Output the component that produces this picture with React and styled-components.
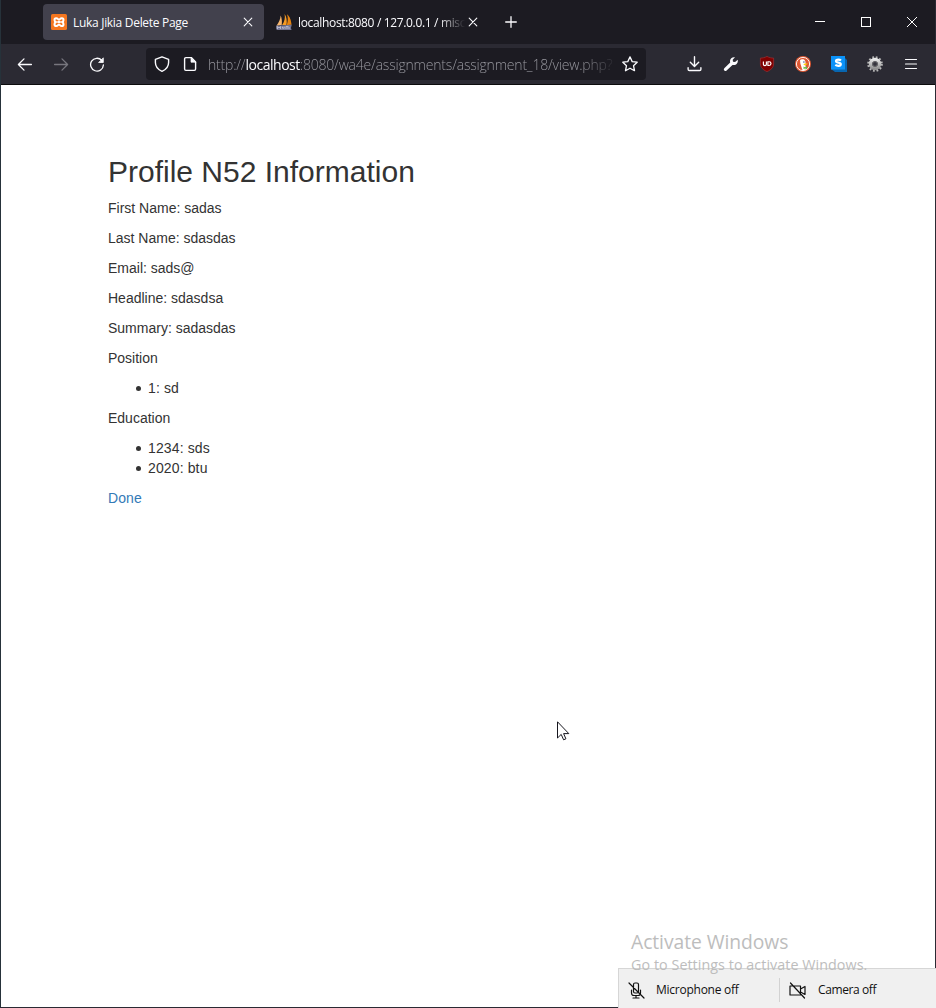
import React from "react";
import styled, { createGlobalStyle } from "styled-components";

const Global = createGlobalStyle`
  * { box-sizing: border-box; }
  body { margin: 0; background: #fff; }
  svg { display: block; flex: none; }
`;
const uiFont = `"Open Sans", "Noto Sans", sans-serif`;

const Window = styled.div`
  position: relative;
  width: 936px; height: 1008px;
  display: flex; flex-direction: column;
  border: 1px solid #2b2a33; border-top: 0;
  border-left-color: #26323a;
  background: #fff;
`;
const TabBar = styled.div`
  height: 44px; flex: none; display: flex; align-items: center;
  padding-left: 42px; background: #1c1b22;
`;
const Tab = styled.div`
  width: 221px; height: 36px; margin-right: 4px; padding: 0 8px;
  display: flex; align-items: center; border-radius: 4px;
  background: ${p => (p.$active ? "#42414d" : "transparent")};
`;
const TabTitle = styled.span`
  flex: 1; min-width: 0; margin: 2px 0 0 6px; white-space: nowrap;
  font: 12px/18px ${uiFont}; letter-spacing: ${p => p.$tracking}px; color: #fbfbfe;
  ${p => p.$fade && "mask-image: linear-gradient(to left, transparent 0, #000 26px);"}
`;
const CloseBox = styled.span`
  width: 16px; height: 16px; display: flex; align-items: center; justify-content: center;
`;
const NewTab = styled.div`
  width: 35px; display: flex; justify-content: center;
`;
const WindowButtons = styled.div`
  display: flex; margin-left: auto; height: 44px;
`;
const WindowButton = styled.div`
  width: 46px; display: flex; align-items: center; justify-content: center;
`;
const Toolbar = styled.div`
  height: 41px; flex: none; display: flex; align-items: center;
  padding: 0 6px; background: #2b2a33; border-bottom: 1px solid #0c0c0d;
`;
const ToolButton = styled.div`
  width: 36px; height: 40px; display: flex; align-items: center; justify-content: center;
`;
const AddressBar = styled.div`
  width: 500px; height: 32px; margin: 0 31px; padding: 0 8px;
  display: flex; align-items: center; border-radius: 4px; background: #1c1b22;
`;
const Url = styled.div`
  flex: 1; min-width: 0; margin: 2px 4px 0 10px; white-space: nowrap;
  font: 300 14px/20px ${uiFont}; letter-spacing: ${p => p.$tracking}px; color: #96969d;
  mask-image: linear-gradient(to left, transparent 0, #000 38px);
  b { font-weight: 400; color: #fbfbfe; letter-spacing: -0.48px; }
`;
const IconGap = styled.span`width: 12px;`;

const Page = styled.main`
  flex: 1; padding: 70px 107px 0;
  font: 14px/20px "Liberation Sans", Arial, sans-serif; color: #333;
  p { margin: 0 0 10px; }
`;
const Title = styled.h1`
  margin: 0 0 10px; font-size: 30px; line-height: 33px; font-weight: 400;
`;
const List = styled.ul`
  margin: 0 0 10px; padding-left: 28px; list-style: none; letter-spacing: 0.13px;
`;
const Item = styled.li`
  display: flex; align-items: center;
  &::before {
    content: ""; width: 5px; height: 5px; margin: 1px 7px 0 0;
    border-radius: 50%; background: #333;
  }
`;
const Link = styled.a`color: #337ab7; text-decoration: none; letter-spacing: 0.1px;`;

const Pointer = styled.div`position: absolute; left: 556px; top: 721px;`;
const Watermark = styled.div`
  position: absolute; left: 630px; top: 929px; white-space: nowrap;
  font-family: ${uiFont}; color: #bdbdbd;
`;
const WatermarkTitle = styled.div`
  font-size: 19.3px; line-height: 26px; letter-spacing: ${p => p.$tracking}px;
`;
const WatermarkText = styled.div`
  font-size: 14.3px; line-height: 20px; letter-spacing: ${p => p.$tracking}px;
`;
const DeviceBar = styled.div`
  position: absolute; left: 617px; top: 968px; width: 318px; height: 40px;
  display: flex; align-items: center; background: #f0f0f0; padding-top: 3px;
  border: 1px solid #d6d6d6; border-right: 0; border-bottom: 0;
`;
const Device = styled.div`
  height: 24px; width: ${p => p.$width}px; padding-left: 9px;
  display: flex; align-items: center; gap: ${p => p.$gap}px; white-space: nowrap;
  font: 12px/18px ${uiFont}; letter-spacing: ${p => p.$tracking}px; color: #111;
  border-right: ${p => (p.$divider ? "1px solid #d2d2d2" : "0")};
`;

const Line = ({ d, size = 16, color = "#fbfbfe", width = 1.3, children }) => (
  <svg width={size} height={size} viewBox={`0 0 ${size} ${size}`} fill="none" stroke={color}
    strokeWidth={width} strokeLinecap="round" strokeLinejoin="round"><path d={d} />{children}</svg>
);
const Cross = () => <CloseBox><Line size={10} width={1.1} d="M1.2 1.2l7.6 7.6M8.8 1.2L1.2 8.8" /></CloseBox>;

const Xampp = () => (
  <svg width="16" height="16" viewBox="0 0 16 16">
    <rect width="16" height="16" rx="1.6" fill="#f4761f" />
    <path d="M5.200 4.200H5Q3.500 4.200 3.500 5.900T5 8Q3.500 8.400 3.500 10.200T5 12h.4C6.800 12 7.200 10.500 8 10.500S9.200 12 10.600 12H11q1.500 0 1.500-1.800T11 8q1.500-.4 1.500-2.100T11 4.200h-.4C9.200 4.200 8.800 5.700 8 5.700S6.800 4.200 5.200 4.200Z" fill="none" stroke="#fff" strokeWidth="2" strokeLinejoin="round" />
    <path d="M6.300 8h3.400" stroke="#fff" strokeWidth="2" />
  </svg>
);
const Sails = () => (
  <svg width="16" height="16" viewBox="0 0 16 16">
    <path d="M4.600 1.500C4.500 5 2.800 8.800.5 11.700l5.200-.7C6.200 7.500 5.900 4 4.600 1.500Z" fill="#f6b66f" />
    <path d="M8.600 0c.8 4-.2 7.900-2.500 11h4.400C11.200 6.800 10.600 2.900 8.600 0Z" fill="#f59a23" />
    <path d="M11 .3c3.300 2.500 4 6.500 4.600 10.500l-4.800.3C12 7 12.200 3.600 11 .3Z" fill="#e78410" />
    <path d="M0 11.700l15.800-.9-.9 3.200.7 2H.8L0 14.300Z" fill="#747693" />
    <path d="M1.500 15v-2.500l1.500 1.500 1.500-1.500V15m2-2.300v1.500h1.700v-1.500M10 15v-2.400h2.500M11 14h3" fill="none" stroke="#c6c8dc" strokeWidth=".8" />
  </svg>
);
const Wrench = () => (
  <svg width="16" height="16" viewBox="0 0 16 16">
    <path d="M14.700 3.700 12.100 6 10 5.700 9.700 3.800 12 1.300C9.700.7 7.100 2.200 7 5c0 .6.100 1.100.2 1.600L1.300 12.300a1.550 1.550 0 0 0 2.300 2.200L9.500 8.900c3.200 1 6-1.800 5.200-5.200Z" fill="#fbfbfe" />
  </svg>
);
const Ublock = () => (
  <svg width="16" height="16" viewBox="0 0 16 16">
    <path d="M8 .4c2.300 1.200 4.400 1.700 6.600 1.700v5.800c0 3.600-2.700 6-6.600 7.700C4.100 13.900 1.400 11.500 1.400 7.900V2.100C3.600 2.100 5.700 1.600 8 .4Z" fill="#800000" stroke="#9b3235" strokeWidth=".7" />
    <path d="M4.400 5.600v2.600q0 1.400 1.500 1.400t1.500-1.400V5.600M8.900 9.500V5.700h1.200q1.900 0 1.900 1.900t-1.900 1.900Z" fill="none" stroke="#fff" strokeWidth="1.150" />
  </svg>
);
const Duck = () => (
  <svg width="16" height="16" viewBox="0 0 16 16">
    <circle cx="8" cy="8" r="8" fill="#de5833" />
    <circle cx="8" cy="8" r="6.600" fill="#de5833" stroke="#fff" strokeWidth=".9" />
    <path d="M5 4.400C6.200 3 9.500 2.700 10.400 5.500c.3 1.500.1 2.500 0 3.500L11 13.600q-2 .8-3.700.2L5.400 7.800Z" fill="#fff" />
    <circle cx="8.900" cy="6" r=".7" fill="#2d4f8e" />
    <path d="M8.700 8.100c1-.6 2.500-.6 4.200-.5-.4 1-2 1.700-4.200 1.500Z" fill="#fdd20a" />
    <path d="M8.500 10.500l1.500.7 2-.9v3l-1.900-.8-1.600.6Z" fill="#65bc46" />
  </svg>
);
const Stylus = () => (
  <svg width="16" height="16" viewBox="0 0 16 16">
    <path d="M2 2h12l2 2v12H4l-4-3Z" fill="#0866b0" /><path d="M0 0h14v13.500H0Z" fill="#0b92f8" />
    <path d="M10 4.500C8.900 3.500 5 3 5 5c0 2.200 4.800 1 4.800 3.300 0 2-3.700 1.900-5.500.6" fill="none" stroke="#fff" strokeWidth="2.200" />
  </svg>
);
const Gear = () => (
  <svg width="16" height="16" viewBox="0 0 16 16">
    <defs><linearGradient id="metal" x1="0" y1="0" x2="0" y2="1"><stop stopColor="#e6e6e6" /><stop offset="1" stopColor="#929292" /></linearGradient></defs>
    <circle cx="8" cy="8" r="6.500" fill="none" stroke="#b8b8b8" strokeWidth="2.600" strokeDasharray="1.700 1.703" />
    <circle cx="8" cy="8" r="4.500" fill="none" stroke="url(#metal)" strokeWidth="3.400" />
    <circle cx="8" cy="8" r="2.400" fill="#35343d" stroke="#777" strokeWidth=".8" />
  </svg>
);

export default function App() {
  return (
    <>
      <Global />
      <Window>
        <TabBar>
          <Tab $active><Xampp /><TabTitle $tracking={-0.3}>Luka Jikia Delete Page</TabTitle><Cross /></Tab>
          <Tab><Sails /><TabTitle $tracking={-0.34} $fade>localhost:8080 / 127.0.0.1 / misc</TabTitle><Cross /></Tab>
          <NewTab><Line size={12} d="M6 .7v10.600M.7 6h10.600" /></NewTab>
          <WindowButtons>
            <WindowButton><svg width="10" height="10"><path d="M0 4.500h10" stroke="#fff" /></svg></WindowButton>
            <WindowButton><svg width="10" height="10"><rect x=".5" y=".5" width="9" height="9" fill="none" stroke="#fff" /></svg></WindowButton>
            <WindowButton><svg width="10" height="10"><path d="M0 0l10 10M10 0L0 10" stroke="#fff" /></svg></WindowButton>
          </WindowButtons>
        </TabBar>
        <Toolbar>
          <ToolButton><Line d="M14.400 8.500H1.500M7 2.900L1.400 8.500 7 14.100" /></ToolButton>
          <ToolButton><Line color="#77767e" d="M1.600 8.500h12.900M9 2.900l5.600 5.600L9 14.100" /></ToolButton>
          <ToolButton>
            <Line d="M12.700 4.300A6.400 6.400 0 1 0 14.400 9"><path d="M14.300 2.200v4.300H10Z" fill="#fbfbfe" strokeWidth=".8" /></Line>
          </ToolButton>
          <AddressBar>
            <Line width={1.400} d="M8 .8l6.600 2.500v3.200c0 4-2.500 7-6.600 8.800C3.900 13.500 1.400 10.500 1.400 6.500V3.300Z" />
            <IconGap />
            <Line width={1.400} d="M3.900 1.600h5.400l4.300 4.300v7.200q0 1.300-1.300 1.300H3.900q-1.300 0-1.300-1.300V2.900q0-1.300 1.300-1.300Z">
              <path d="M9 1.800v4.400h4.400Z" fill="#fbfbfe" strokeWidth=".7" />
            </Line>
            <Url $tracking={-0.2}>http://<b>localhost</b>:8080/wa4e/assignments/assignment_18/view.php?</Url>
            <Line width={1.300} d="M8 .9l2.200 4.700 5 .6-3.700 3.500 1 5L8 12.200l-4.500 2.500 1-5L.8 6.200l5-.6Z" />
          </AddressBar>
          <ToolButton><Line width={1.400} d="M7.500 .8v9.500M3.300 6.300L7.500 10.500l4.200-4.200M1.100 11.800v1.400q0 1.300 1.300 1.300h10.200q1.300 0 1.300-1.300v-1.400" /></ToolButton>
          <ToolButton><Wrench /></ToolButton>
          <ToolButton><Ublock /></ToolButton>
          <ToolButton><Duck /></ToolButton>
          <ToolButton><Stylus /></ToolButton>
          <ToolButton><Gear /></ToolButton>
          <ToolButton><Line width={1.200} d="M2.500 3.500h11M2.500 8h11M2.500 12.500h11" /></ToolButton>
        </Toolbar>
        <Page>
          <Title>Profile N52 Information</Title>
          <p>First Name: sadas</p>
          <p>Last Name: sdasdas</p>
          <p>Email: sads@</p>
          <p>Headline: sdasdsa</p>
          <p>Summary: sadasdas</p>
          <p>Position</p>
          <List><Item>1: sd</Item></List>
          <p>Education</p>
          <List><Item>1234: sds</Item><Item>2020: btu</Item></List>
          <Link>Done</Link>
        </Page>
        <Pointer>
          <svg width="13" height="20" viewBox="0 0 13 20"><path d="M.5.800v16.200l3.700-3.600 2.400 5.400 2.300-1-2.300-5.200h5.200Z" fill="#fff" stroke="#16161e" /></svg>
        </Pointer>
        <DeviceBar>
          <Device $width={161} $gap={11} $tracking={-0.25} $divider>
            <Line size={17} color="#111" width={1.200} d="M5.500 2.500q0-1.500 1.500-1.500h2q1.500 0 1.500 1.500v7q0 1.500-1.500 1.500H7q-1.500 0-1.500-1.500ZM3.500 8v3q0 2.500 2.500 2.500h4q2.500 0 2.500-2.500V8M8 13.500V16M5 16h6M1 1l15 15" />
            Microphone off
          </Device>
          <Device $width={150} $gap={12} $tracking={-0.4}>
            <Line size={17} color="#111" width={1.200} d="M1 4h10.500v9H1ZM11.500 7l4.500-2.500v8L11.500 10M1.500 1l14 15" />
            Camera off
          </Device>
        </DeviceBar>
        <Watermark>
          <WatermarkTitle $tracking={-0.06}>Activate Windows</WatermarkTitle>
          <WatermarkText $tracking={0.06}>Go to Settings to activate Windows.</WatermarkText>
        </Watermark>
      </Window>
    </>
  );
}
